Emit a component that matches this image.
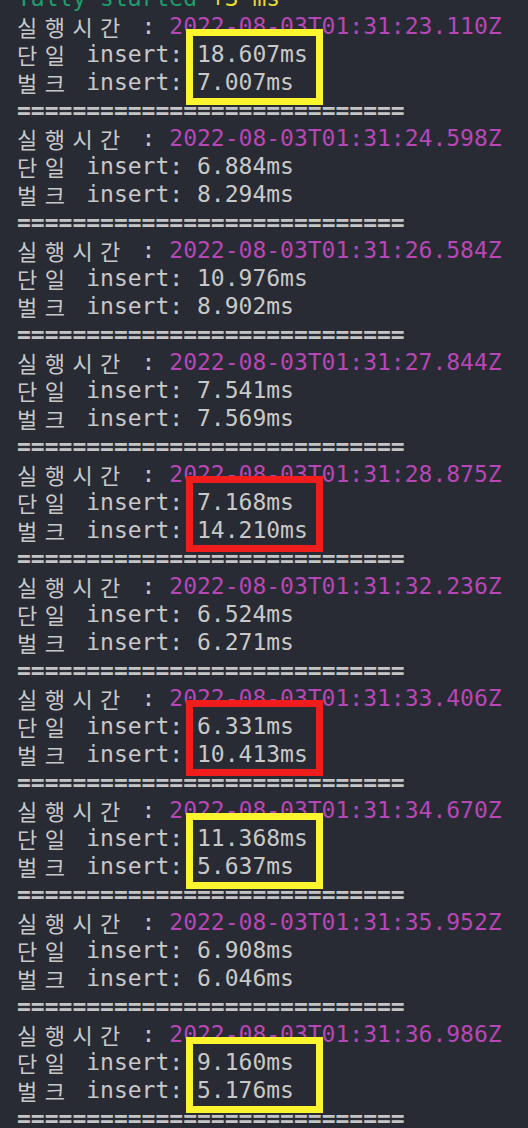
import React from "react";

type Run = {
  time: string;
  single: string;
  bulk: string;
  mark?: "yellow" | "red";
};

const runs: Run[] = [
  { time: "2022-08-03T01:31:23.110Z", single: "18.607ms", bulk: "7.007ms", mark: "yellow" },
  { time: "2022-08-03T01:31:24.598Z", single: "6.884ms", bulk: "8.294ms" },
  { time: "2022-08-03T01:31:26.584Z", single: "10.976ms", bulk: "8.902ms" },
  { time: "2022-08-03T01:31:27.844Z", single: "7.541ms", bulk: "7.569ms" },
  { time: "2022-08-03T01:31:28.875Z", single: "7.168ms", bulk: "14.210ms", mark: "red" },
  { time: "2022-08-03T01:31:32.236Z", single: "6.524ms", bulk: "6.271ms" },
  { time: "2022-08-03T01:31:33.406Z", single: "6.331ms", bulk: "10.413ms", mark: "red" },
  { time: "2022-08-03T01:31:34.670Z", single: "11.368ms", bulk: "5.637ms", mark: "yellow" },
  { time: "2022-08-03T01:31:35.952Z", single: "6.908ms", bulk: "6.046ms" },
  { time: "2022-08-03T01:31:36.986Z", single: "9.160ms", bulk: "5.176ms", mark: "yellow" },
];

// 터미널에서 한글은 2칸을 차지함
const Wide: React.FC<{ text: string }> = ({ text }) => (
  <>
    {text.split("").map((ch, i) => (
      <span
        key={i}
        className="inline-block w-[27.7px] align-top text-left text-[22px] leading-[28px] font-['Noto_Sans_CJK_KR',sans-serif]"
      >
        {ch}
      </span>
    ))}
  </>
);

const Line: React.FC<{ children: React.ReactNode; className?: string }> = ({
  children,
  className = "",
}) => <div className={"h-[28px] whitespace-pre " + className}>{children}</div>;

const Block: React.FC<{ run: Run }> = ({ run }) => (
  <div className="relative">
    <Line>
      <Wide text="실행시간" />
      {" : "}
      <span className="text-[#b746b6]">{run.time}</span>
    </Line>
    <Line>
      <Wide text="단일" />
      {" insert: "}
      {run.single}
    </Line>
    <Line>
      <Wide text="벌크" />
      {" insert: "}
      {run.bulk}
    </Line>
    <Line className="font-bold text-[#c4c4c4]">{"=".repeat(28)}</Line>

    {run.mark && (
      <div
        className={
          run.mark === "yellow"
            ? "absolute left-[169px] top-[17px] w-[137px] h-[76px] border-[7px] border-[#fcf52e]"
            : "absolute left-[169px] top-[16px] w-[137px] h-[76px] border-[7px] border-[#f11c1c]"
        }
      />
    )}
  </div>
);

export default function App() {
  return (
    <div className="h-[1128px] overflow-hidden bg-[#282b33] pl-[17px] text-[#c8c8c8] font-['DejaVu_Sans_Mono',monospace] text-[23px] leading-[28px]">
      <div className="-mt-[16px] h-[28px] whitespace-pre">
        <span className="text-[#1d9e6a]">Tally started</span>{" "}
        <span className="text-[#e8d930]">+3 ms</span>
      </div>
      {runs.map((run) => (
        <Block key={run.time} run={run} />
      ))}
    </div>
  );
}
